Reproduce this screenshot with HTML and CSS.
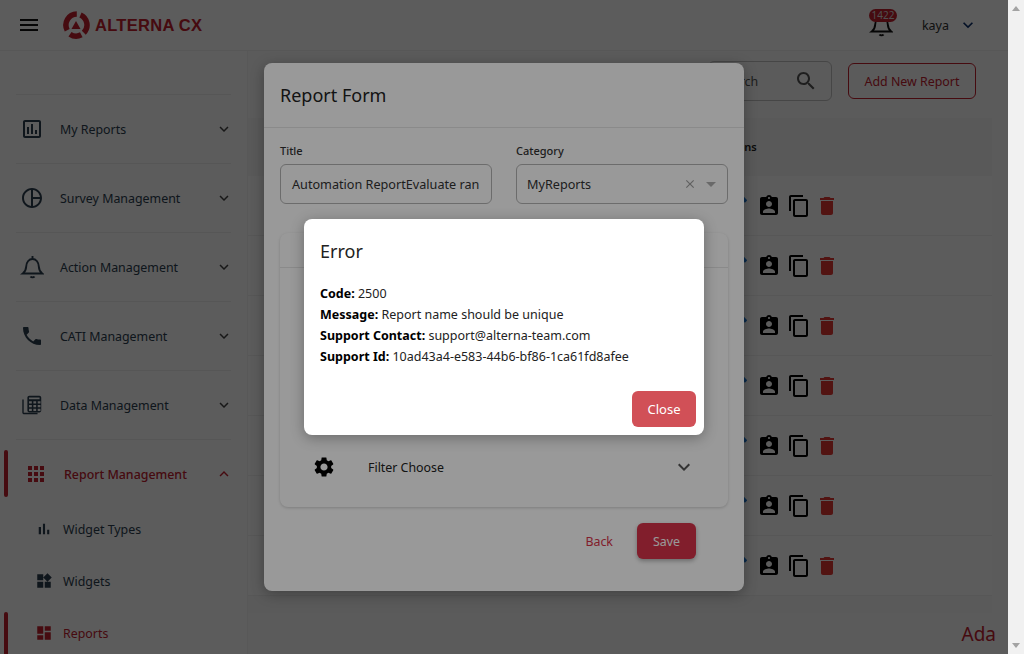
FILE: index.html
```html
<!DOCTYPE html>
<html lang="en">
<head>
    <meta charset="UTF-8">
    <meta name="viewport" content="width=device-width, initial-scale=1.0">
    <title>Alterna CX - Reports</title>
    <link rel="stylesheet" href="styles.css">
</head>
<body>
    <svg class="sprite" xmlns="http://www.w3.org/2000/svg">
        <symbol id="i-menu" viewBox="0 0 24 24"><path d="M3 18h18v-2H3v2zm0-5h18v-2H3v2zm0-7v2h18V6H3z"/></symbol>
        <symbol id="i-more" viewBox="0 0 24 24"><path d="M16.59 8.59L12 13.17 7.41 8.59 6 10l6 6 6-6z"/></symbol>
        <symbol id="i-less" viewBox="0 0 24 24"><path d="M12 8l-6 6 1.41 1.41L12 10.83l4.59 4.58L18 14z"/></symbol>
        <symbol id="i-assessment" viewBox="0 0 24 24"><path d="M19 3H5c-1.1 0-2 .9-2 2v14c0 1.1.9 2 2 2h14c1.1 0 2-.9 2-2V5c0-1.1-.9-2-2-2zm0 16H5V5h14v14zM7 10h2v7H7zm4-3h2v10h-2zm4 6h2v4h-2z"/></symbol>
        <symbol id="i-pie" viewBox="0 0 24 24"><path d="M12 2C6.49 2 2 6.49 2 12s4.49 10 10 10 10-4.49 10-10S17.51 2 12 2zm1 2.07c3.61.45 6.48 3.33 6.93 6.93H13V4.07zM4 12c0-4.06 3.07-7.44 7-7.93v15.87c-3.93-.5-7-3.88-7-7.94zm9 7.93V13h6.93c-.45 3.61-3.32 6.48-6.93 6.93z"/></symbol>
        <symbol id="i-bell" viewBox="0 0 24 24">
            <g fill="none" stroke="currentColor" stroke-width="1.9">
                <path d="M12.5 1v2.5"/>
                <path d="M2.8 18.5c2-1.5 3.2-3.5 3.4-7 .3-4.5 2.8-7.5 6.3-7.5s6 3 6.3 7.5c.2 3.5 1.4 5.500 3.4 7z"/>
                <path d="M10.5 21.5c.8 1.1 3.2 1.1 4 0"/>
            </g>
        </symbol>
        <symbol id="i-phone" viewBox="0 0 24 24"><path d="M6.62 10.79c1.44 2.83 3.76 5.14 6.59 6.59l2.2-2.2c.27-.27.67-.36 1.02-.24 1.12.37 2.33.57 3.57.57.55 0 1 .45 1 1V20c0 .55-.45 1-1 1-9.39 0-17-7.61-17-17 0-.55.45-1 1-1h3.5c.55 0 1 .45 1 1 0 1.25.2 2.45.57 3.57.11.35.03.74-.25 1.02l-2.2 2.2z"/></symbol>
        <symbol id="i-data" viewBox="-1 -1 26 26">
            <path d="M3 6H1.5v14c0 1.1.9 2 2 2H18v-1.5H3V6z"/>
            <path d="M7 4c0-1.1.9-2 2-2h11c1.1 0 2 .9 2 2v14c0 1.1-.9 2-2 2H9c-1.1 0-2-.9-2-2V4zm1.8 0v1.800h11.400V4H8.800zm0 4v2.500h3V8h-3zm4.700 0v2.500h3V8h-3zm4.700 0v2.500h3V8h-3zm-9.400 4v2.500h3V12h-3zm4.700 0v2.500h3V12h-3zm4.700 0v2.500h3V12h-3zm-9.400 4v2.500h3V16h-3zm4.700 0v2.500h3V16h-3zm4.700 0v2.500h3V16h-3z" fill-rule="evenodd"/>
        </symbol>
        <symbol id="i-apps" viewBox="0 0 24 24"><path d="M4 8h4V4H4v4zm6 12h4v-4h-4v4zm-6 0h4v-4H4v4zm0-6h4v-4H4v4zm6 0h4v-4h-4v4zm6-10v4h4V4h-4zm-6 4h4V4h-4v4zm6 6h4v-4h-4v4zm0 6h4v-4h-4v4z"/></symbol>
        <symbol id="i-bars" viewBox="0 0 24 24"><path d="M5 9.2h3V19H5zM10.6 5h2.8v14h-2.8zm5.6 8H19v6h-2.8z"/></symbol>
        <symbol id="i-widgets" viewBox="0 0 24 24"><path d="M13 13v8h8v-8h-8zM3 21h8v-8H3v8zM3 3v8h8V3H3zm13.66-1.31L11 7.34 16.66 13l5.66-5.66-5.66-5.65z"/></symbol>
        <symbol id="i-dashboard" viewBox="0 0 24 24"><path d="M3 13h8V3H3v10zm0 8h8v-6H3v6zm10 0h8V11h-8v10zm0-18v6h8V3h-8z"/></symbol>
        <symbol id="i-search" viewBox="0 0 24 24"><path d="M15.5 14h-.79l-.28-.27C15.41 12.59 16 11.11 16 9.5 16 5.91 13.09 3 9.5 3S3 5.91 3 9.5 5.91 16 9.5 16c1.61 0 3.09-.59 4.23-1.57l.27.28v.79l5 4.99L20.49 19l-4.99-5zm-6 0C7.01 14 5 11.99 5 9.5S7.01 5 9.5 5 14 7.01 14 9.5 11.99 14 9.5 14z"/></symbol>
        <symbol id="i-edit" viewBox="0 0 24 24"><path d="M3 17.25V21h3.75L17.81 9.94l-3.75-3.75L3 17.25zM20.71 7.04c.39-.39.39-1.02 0-1.41l-2.34-2.34c-.39-.39-1.02-.39-1.41 0l-1.83 1.83 3.75 3.75 1.83-1.83z"/></symbol>
        <symbol id="i-badge" viewBox="0 0 24 24"><path d="M19 3h-4.18C14.4 1.84 13.3 1 12 1c-1.3 0-2.4.84-2.82 2H5c-1.1 0-2 .9-2 2v14c0 1.1.9 2 2 2h14c1.1 0 2-.9 2-2V5c0-1.1-.9-2-2-2zm-7 0c.55 0 1 .45 1 1s-.45 1-1 1-1-.45-1-1 .45-1 1-1zm0 4c1.66 0 3 1.34 3 3s-1.34 3-3 3-3-1.34-3-3 1.34-3 3-3zm6 12H6v-1.4c0-2 4-3.1 6-3.1s6 1.1 6 3.1V19z"/></symbol>
        <symbol id="i-copy" viewBox="0 0 24 24"><path d="M16 1H4c-1.1 0-2 .9-2 2v14h2V3h12V1zm3 4H8c-1.1 0-2 .9-2 2v14c0 1.1.9 2 2 2h11c1.1 0 2-.9 2-2V7c0-1.1-.9-2-2-2zm0 16H8V7h11v14z"/></symbol>
        <symbol id="i-delete" viewBox="0 0 24 24"><path d="M6 19c0 1.1.9 2 2 2h8c1.1 0 2-.9 2-2V7H6v12zM19 4h-3.5l-1-1h-5l-1 1H5v2h14V4z"/></symbol>
        <symbol id="i-gear" viewBox="0 0 24 24"><path d="M19.14 12.94c.04-.3.06-.61.06-.94 0-.32-.02-.64-.07-.94l2.03-1.58c.18-.14.23-.41.12-.61l-1.92-3.32c-.12-.22-.37-.29-.59-.22l-2.39.96c-.5-.38-1.03-.7-1.62-.94l-.36-2.54c-.04-.24-.24-.41-.48-.41h-3.84c-.24 0-.43.17-.47.41l-.36 2.54c-.59.24-1.13.57-1.62.94l-2.39-.96c-.22-.08-.47 0-.59.22L2.74 8.87c-.12.21-.08.47.12.61l2.03 1.58c-.05.3-.09.63-.09.94s.02.64.07.94l-2.03 1.58c-.18.14-.23.41-.12.61l1.92 3.32c.12.22.37.29.59.22l2.39-.96c.5.38 1.03.7 1.62.94l.36 2.54c.05.24.24.41.48.41h3.84c.24 0 .44-.17.47-.41l.36-2.54c.59-.24 1.13-.56 1.62-.94l2.39.96c.22.08.47 0 .59-.22l1.92-3.32c.12-.22.07-.47-.12-.61l-2.01-1.58zM12 15.6c-1.98 0-3.6-1.62-3.6-3.6s1.62-3.6 3.6-3.6 3.6 1.62 3.6 3.6-1.62 3.6-3.6 3.6z"/></symbol>
        <symbol id="i-clear" viewBox="0 0 24 24"><path d="M19 6.41L17.59 5 12 10.59 6.41 5 5 6.41 10.59 12 5 17.59 6.41 19 12 13.41 17.59 19 19 17.59 13.41 12z"/></symbol>
    </svg>

    <div class="window">
        <div class="page">
            <header class="topbar">
                <svg class="icon menu-btn"><use href="#i-menu"/></svg>
                <div class="logo">
                    <svg class="logo-mark" viewBox="0 0 28 28">
                        <g fill="none" stroke="#c4202f" stroke-width="5.5">
                            <path d="M5.2 19.2A11 11 0 0 1 14.8 3.1"/>
                            <path d="M18.5 4A11 11 0 0 1 21.8 21.8"/>
                            <path d="M19.3 23.8A11 11 0 0 1 8 23.2"/>
                        </g>
                        <path d="M14 10l4.5 8h-9z" fill="#c4202f"/>
                    </svg>
                    <span class="logo-text">ALTERNA<span class="logo-cx">CX</span></span>
                </div>
                <div class="topbar-right">
                    <div class="notify">
                        <svg class="icon bell"><use href="#i-bell"/></svg>
                        <span class="notify-count">1422</span>
                    </div>
                    <span class="username">kaya</span>
                    <svg class="icon user-caret"><use href="#i-more"/></svg>
                </div>
            </header>

            <div class="content">
                <nav class="sidebar">
                    <div class="nav-item">
                        <svg class="icon nav-icon"><use href="#i-assessment"/></svg>
                        <span class="nav-label">My Reports</span>
                        <svg class="icon nav-caret"><use href="#i-more"/></svg>
                    </div>
                    <div class="nav-item">
                        <svg class="icon nav-icon"><use href="#i-pie"/></svg>
                        <span class="nav-label">Survey Management</span>
                        <svg class="icon nav-caret"><use href="#i-more"/></svg>
                    </div>
                    <div class="nav-item">
                        <svg class="icon nav-icon"><use href="#i-bell"/></svg>
                        <span class="nav-label">Action Management</span>
                        <svg class="icon nav-caret"><use href="#i-more"/></svg>
                    </div>
                    <div class="nav-item">
                        <svg class="icon nav-icon"><use href="#i-phone"/></svg>
                        <span class="nav-label">CATI Management</span>
                        <svg class="icon nav-caret"><use href="#i-more"/></svg>
                    </div>
                    <div class="nav-item">
                        <svg class="icon nav-icon"><use href="#i-data"/></svg>
                        <span class="nav-label">Data Management</span>
                        <svg class="icon nav-caret"><use href="#i-more"/></svg>
                    </div>
                    <div class="nav-item nav-open">
                        <svg class="icon nav-icon"><use href="#i-apps"/></svg>
                        <span class="nav-label">Report Management</span>
                        <svg class="icon nav-caret"><use href="#i-less"/></svg>
                    </div>
                    <div class="nav-sub">
                        <svg class="icon sub-icon"><use href="#i-bars"/></svg>
                        <span>Widget Types</span>
                    </div>
                    <div class="nav-sub">
                        <svg class="icon sub-icon"><use href="#i-widgets"/></svg>
                        <span>Widgets</span>
                    </div>
                    <div class="nav-sub nav-active">
                        <svg class="icon sub-icon"><use href="#i-dashboard"/></svg>
                        <span>Reports</span>
                    </div>
                </nav>

                <main class="main">
                    <div class="toolbar">
                        <div class="search">
                            <span class="search-text">Search</span>
                            <svg class="icon search-icon"><use href="#i-search"/></svg>
                        </div>
                        <button class="btn-outline">Add New Report</button>
                    </div>
                    <div class="table">
                        <div class="table-head">Actions</div>
                        <div class="table-row">
                            <svg class="icon act act-edit"><use href="#i-edit"/></svg>
                            <svg class="icon act"><use href="#i-badge"/></svg>
                            <svg class="icon act"><use href="#i-copy"/></svg>
                            <svg class="icon act act-del"><use href="#i-delete"/></svg>
                        </div>
                        <div class="table-row">
                            <svg class="icon act act-edit"><use href="#i-edit"/></svg>
                            <svg class="icon act"><use href="#i-badge"/></svg>
                            <svg class="icon act"><use href="#i-copy"/></svg>
                            <svg class="icon act act-del"><use href="#i-delete"/></svg>
                        </div>
                        <div class="table-row">
                            <svg class="icon act act-edit"><use href="#i-edit"/></svg>
                            <svg class="icon act"><use href="#i-badge"/></svg>
                            <svg class="icon act"><use href="#i-copy"/></svg>
                            <svg class="icon act act-del"><use href="#i-delete"/></svg>
                        </div>
                        <div class="table-row">
                            <svg class="icon act act-edit"><use href="#i-edit"/></svg>
                            <svg class="icon act"><use href="#i-badge"/></svg>
                            <svg class="icon act"><use href="#i-copy"/></svg>
                            <svg class="icon act act-del"><use href="#i-delete"/></svg>
                        </div>
                        <div class="table-row">
                            <svg class="icon act act-edit"><use href="#i-edit"/></svg>
                            <svg class="icon act"><use href="#i-badge"/></svg>
                            <svg class="icon act"><use href="#i-copy"/></svg>
                            <svg class="icon act act-del"><use href="#i-delete"/></svg>
                        </div>
                        <div class="table-row">
                            <svg class="icon act act-edit"><use href="#i-edit"/></svg>
                            <svg class="icon act"><use href="#i-badge"/></svg>
                            <svg class="icon act"><use href="#i-copy"/></svg>
                            <svg class="icon act act-del"><use href="#i-delete"/></svg>
                        </div>
                        <div class="table-row">
                            <svg class="icon act act-edit"><use href="#i-edit"/></svg>
                            <svg class="icon act"><use href="#i-badge"/></svg>
                            <svg class="icon act"><use href="#i-copy"/></svg>
                            <svg class="icon act act-del"><use href="#i-delete"/></svg>
                        </div>
                        <div class="table-foot"></div>
                    </div>
                    <div class="footer-name">Ada</div>
                </main>
            </div>

            <div class="overlay overlay-form">
                <div class="dialog form-dialog">
                    <h2 class="form-title">Report Form</h2>
                    <div class="form-fields">
                        <div class="field">
                            <label class="field-label">Title</label>
                            <div class="field-box">Automation ReportEvaluate ran</div>
                        </div>
                        <div class="field">
                            <label class="field-label">Category</label>
                            <div class="field-box field-select">
                                <span class="select-value">MyReports</span>
                                <svg class="icon select-clear"><use href="#i-clear"/></svg>
                                <span class="select-arrow"></span>
                            </div>
                        </div>
                    </div>
                    <div class="steps">
                        <div class="step-head"></div>
                        <div class="step-body"></div>
                        <div class="step-row">
                            <svg class="icon step-icon"><use href="#i-gear"/></svg>
                            <span class="step-label">Filter Choose</span>
                            <svg class="icon step-caret"><use href="#i-more"/></svg>
                        </div>
                    </div>
                    <div class="form-actions">
                        <button class="btn-text">Back</button>
                        <button class="btn-save">Save</button>
                    </div>
                </div>
            </div>

            <div class="overlay overlay-error">
                <div class="dialog error-dialog">
                    <h2 class="error-title">Error</h2>
                    <div class="error-lines">
                        <p><b>Code:</b> 2500</p>
                        <p><b>Message:</b> Report name should be unique</p>
                        <p><b>Support Contact:</b> support@alterna-team.com</p>
                        <p><b>Support Id:</b> 10ad43a4-e583-44b6-bf86-1ca61fd8afee</p>
                    </div>
                    <div class="error-actions">
                        <button class="btn-close">Close</button>
                    </div>
                </div>
            </div>
        </div>

        <div class="scrollbar">
            <span class="scroll-up"></span>
            <span class="scroll-down"></span>
        </div>
    </div>
</body>
</html>
```

FILE: styles.css
```css
* {
    box-sizing: border-box;
}
html, body {
    height: 100%;
}
body {
    margin: 0;
    overflow: hidden;
    font-family: "Noto Sans", "Open Sans", sans-serif;
    font-size: 12.4px;
    color: #2c3e50;
    background: #fff;
}
button {
    font-family: inherit;
    cursor: pointer;
}
.sprite {
    display: none;
}
.icon {
    display: block;
    flex: none;
    fill: currentColor;
}

.window {
    display: flex;
    height: 654px;
}
.page {
    position: relative;
    width: 1008px;
    height: 654px;
    overflow: hidden;
    background: #fff;
}
.scrollbar {
    width: 16px;
    background: #f1f1f1;
    display: flex;
    flex-direction: column;
    justify-content: space-between;
    align-items: center;
    padding: 6px 0;
}
.scroll-up {
    border: 4px solid transparent;
    border-top: 0;
    border-bottom: 5px solid #a3a3a3;
}
.scroll-down {
    border: 4px solid transparent;
    border-bottom: 0;
    border-top: 5px solid #a3a3a3;
}

/* header */
.topbar {
    display: flex;
    align-items: center;
    height: 51px;
    padding: 0 20px 0 17px;
    border-bottom: 1px solid #f2f2f2;
}
.menu-btn {
    width: 24px;
    height: 24px;
    color: #111;
}
.logo {
    display: flex;
    align-items: center;
    margin-left: 21px;
}
.logo-mark {
    width: 28px;
    height: 28px;
}
.logo-text {
    margin-left: 5px;
    font-family: "Liberation Sans", sans-serif;
    font-size: 16.5px;
    font-weight: 700;
    letter-spacing: 0.3px;
    color: #c4202f;
}
.logo-cx {
    margin-left: 4px;
}
.topbar-right {
    display: flex;
    align-items: center;
    margin-left: auto;
    margin-right: 10px;
}
.notify {
    position: relative;
    width: 24px;
    height: 24px;
}
.bell {
    width: 24px;
    height: 24px;
    color: #111;
}
.notify-count {
    position: absolute;
    top: -4px;
    left: 0;
    width: 28px;
    height: 13px;
    border-radius: 7px;
    background: #c4202f;
    color: #ddd;
    font-size: 10px;
    line-height: 13px;
    text-align: center;
}
.username {
    margin-left: 29px;
    font-size: 12.5px;
    color: #333;
}
.user-caret {
    width: 20px;
    height: 20px;
    margin-left: 9px;
    color: #0a2f6b;
}

/* sidebar */
.content {
    display: flex;
    height: 603px;
}
.sidebar {
    flex: none;
    width: 248px;
    padding-top: 43px;
    background: #fff;
    border-right: 1px solid #f6f6f6;
}
.nav-item {
    position: relative;
    display: flex;
    align-items: center;
    height: 69px;
    margin: 0 16px;
    padding-left: 4px;
    border-top: 1px solid #f0f0f0;
}
.nav-icon {
    width: 24px;
    height: 24px;
}
.nav-label {
    margin-left: 16px;
    flex: 1;
}
.nav-caret {
    width: 18px;
    height: 18px;
    margin-right: -2px;
    color: #444;
}
.nav-open {
    margin-bottom: -5px;
    color: #c4202f;
}
.nav-open .nav-icon {
    margin-left: 4px;
}
.nav-open .nav-label {
    font-weight: 500;
}
.nav-open .nav-caret {
    color: #c4202f;
}
.nav-open::before, .nav-active::before {
    content: "";
    position: absolute;
    left: -12px;
    width: 4px;
    border-radius: 2px;
    background: #c4202f;
}
.nav-open::before {
    top: 10px;
    height: 47px;
}
.nav-sub {
    position: relative;
    display: flex;
    align-items: center;
    height: 52px;
    margin: 0 16px;
    padding-left: 19px;
}
.sub-icon {
    width: 18px;
    height: 18px;
    margin-right: 10px;
}
.nav-active {
    color: #c4202f;
}
.nav-active::before {
    top: 5px;
    height: 60px;
}

/* main area */
.main {
    flex: 1;
    min-width: 0;
    background: #fdfdfd;
}
.toolbar {
    display: flex;
    justify-content: flex-end;
    align-items: center;
    height: 50px;
    margin-top: 5px;
    padding-right: 32px;
    gap: 16px;
}
.search {
    display: flex;
    align-items: center;
    width: 124px;
    height: 40px;
    padding: 0 13px 0 10px;
    border: 1px solid #c4c4c4;
    border-radius: 6px;
    color: #555;
}
.search-text {
    flex: 1;
}
.search-icon {
    width: 24px;
    height: 24px;
    color: #555;
}
.btn-outline {
    width: 128px;
    height: 36px;
    padding: 0;
    border: 1px solid #c4202f;
    border-radius: 6px;
    background: transparent;
    color: #c4202f;
    font-size: 12.4px;
}
.table {
    margin: 12px 16px 0 0;
    background: #fff;
}
.table-head {
    height: 58px;
    padding-left: 469px;
    line-height: 58px;
    background: #f8f8f8;
    font-size: 11px;
    font-weight: 600;
    color: #222;
}
.table-row {
    display: flex;
    align-items: center;
    height: 60px;
    padding-top: 1px;
    padding-left: 478px;
    gap: 6px;
    border-bottom: 1px solid #f2f2f2;
    color: #000;
}
.table-foot {
    height: 17px;
    background: #fafafa;
}
.act {
    width: 24px;
    height: 24px;
}
.act-edit {
    color: #1976d2;
    margin-right: 1px;
}
.act-del {
    color: #e53935;
    margin-left: -2px;
}
.footer-name {
    margin-top: 8px;
    padding-right: 12px;
    text-align: right;
    font-size: 19px;
    color: #c4202f;
}

/* dialogs */
.overlay {
    position: absolute;
    inset: 0;
    display: flex;
    justify-content: center;
    align-items: flex-start;
    background: rgba(0, 0, 0, 0.4);
}
.overlay-form {
    padding-top: 63px;
}
.overlay-error {
    padding-top: 219px;
}
.dialog {
    background: #fff;
    border-radius: 8px;
    box-shadow: 0 3px 14px rgba(0, 0, 0, 0.3);
}
.form-dialog {
    width: 480px;
    height: 528px;
}
.form-title {
    margin: 0;
    height: 65px;
    padding: 0 16px;
    border-bottom: 1px solid #e6e6e6;
    font-size: 18px;
    font-weight: 400;
    line-height: 65px;
    color: #222;
}
.form-fields {
    display: flex;
    gap: 24px;
    padding: 15px 16px 0;
}
.field {
    flex: 1;
    min-width: 0;
}
.field-label {
    display: block;
    margin-bottom: 6px;
    font-size: 11px;
    font-weight: 500;
    line-height: 15px;
    color: #333;
}
.field-box {
    height: 40px;
    padding: 0 11px;
    border: 1px solid #b5b5b5;
    border-radius: 6px;
    font-size: 12.65px;
    line-height: 38px;
    color: #333;
    white-space: nowrap;
    overflow: hidden;
}
.field-select {
    display: flex;
    align-items: center;
    padding-left: 10px;
}
.select-value {
    flex: 1;
}
.select-clear {
    width: 14px;
    height: 14px;
    margin-right: 1px;
    color: #a0a0a0;
}
.select-arrow {
    margin-left: 8px;
    border: 5px solid transparent;
    border-bottom: 0;
    border-top: 5px solid #b0b0b0;
}
.steps {
    display: flex;
    flex-direction: column;
    height: 274px;
    margin: 29px 16px 0;
    border-radius: 8px;
    background: #fff;
    box-shadow: 0 1px 3px rgba(0, 0, 0, 0.18);
}
.step-head {
    height: 35px;
    border-bottom: 1px solid #e6e6e6;
}
.step-body {
    flex: 1;
}
.step-row {
    display: flex;
    align-items: center;
    height: 40px;
    margin-bottom: 20px;
    padding: 0 32px;
    color: #222;
}
.step-icon {
    width: 24px;
    height: 24px;
    margin-right: 32px;
    color: #000;
}
.step-label {
    flex: 1;
}
.step-caret {
    width: 24px;
    height: 24px;
    color: #555;
}
.form-actions {
    display: flex;
    justify-content: flex-end;
    align-items: center;
    gap: 24px;
    padding: 16px 48px 0 0;
}
.btn-text {
    padding: 0;
    border: 0;
    background: none;
    font-size: 12.4px;
    color: #d8334a;
}
.btn-save {
    width: 59px;
    height: 36px;
    padding: 0;
    border: 0;
    border-radius: 6px;
    background: #d8334a;
    color: #fff;
    font-size: 12.4px;
    box-shadow: 0 2px 4px rgba(0, 0, 0, 0.3);
}
.error-dialog {
    display: flex;
    flex-direction: column;
    width: 400px;
    height: 216px;
    padding: 19px 8px 8px 16px;
}
.error-title {
    margin: 0;
    font-size: 18px;
    font-weight: 400;
    line-height: 26px;
    color: #222;
}
.error-lines {
    margin-top: 19px;
}
.error-lines p {
    margin: 0;
    font-size: 12.5px;
    line-height: 21px;
    color: #222;
}
.error-lines b {
    color: #000;
}
.error-actions {
    display: flex;
    justify-content: flex-end;
    margin-top: auto;
}
.btn-close {
    width: 64px;
    height: 36px;
    padding: 0;
    border: 0;
    border-radius: 6px;
    background: #d15057;
    color: #fff;
    font-size: 13px;
}
```
